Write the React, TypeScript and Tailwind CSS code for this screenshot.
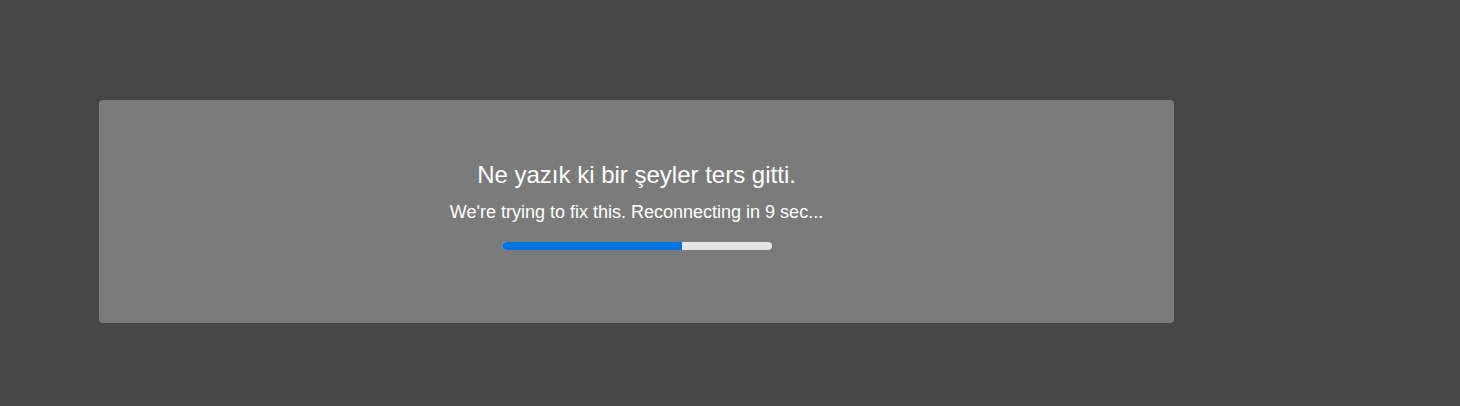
import React from "react";

export default function App() {
  return (
    <div className="w-[1460px] h-[406px] bg-[#474747] pt-[100px] pl-[99px]" style={{ fontFamily: '"Liberation Sans", Arial, sans-serif' }}>
      <div className="w-[1075px] h-[223px] bg-[#7b7b7b] rounded-[4px] flex flex-col items-center pt-[61px]">
        <div className="text-[24px] leading-[28px] text-white">Ne yazık ki bir şeyler ters gitti.</div>
        <div className="mt-[13px] text-[18px] leading-[20px] text-white">We're trying to fix this. Reconnecting in 9 sec...</div>
        <div className="mt-[20px] w-[270px] h-[8px] rounded-full bg-[#e6e6e6] overflow-hidden">
          <div className="h-full bg-[#0074e0] rounded-l-full" style={{ width: "67%" }} />
        </div>
      </div>
    </div>
  );
}
